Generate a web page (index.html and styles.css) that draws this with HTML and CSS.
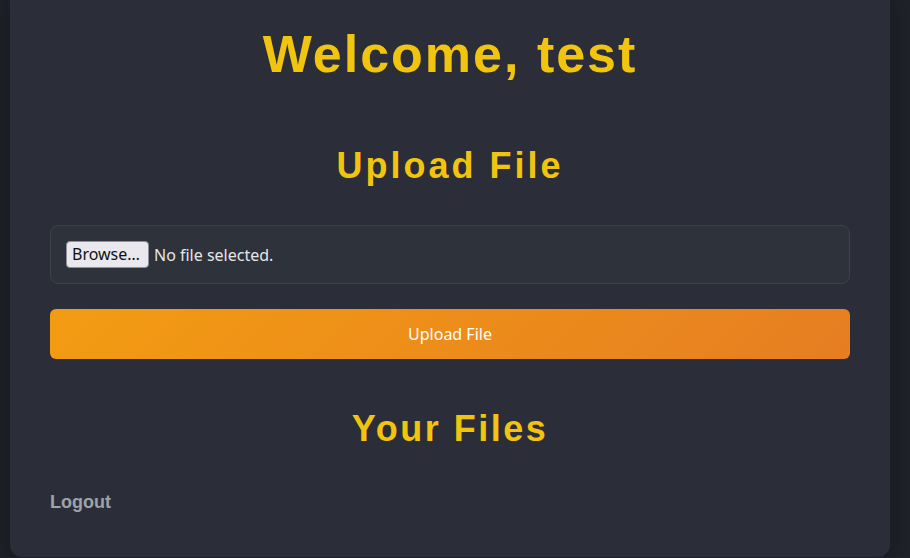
FILE: index.html
```html
<!DOCTYPE html>
<html lang="en">
<head>
  <meta charset="UTF-8" />
  <meta name="viewport" content="width=device-width, initial-scale=1.0"/>
  <title>Dashboard</title>
  <link rel="stylesheet" href="styles.css">
</head>
<body>
  <div class="dashboard">
    <h1>Welcome, test</h1>

    <h2 class="upload-title">Upload File</h2>
    <form class="upload-form">
      <label class="file-field" for="fileInput">
        <input type="file" id="fileInput" class="file-input" name="file"/>
        <span class="browse-btn">Browse…</span>
        <span class="file-name">No file selected.</span>
      </label>
      <button type="submit" class="upload-btn">Upload File</button>
    </form>

    <h2 class="files-title">Your Files</h2>
    <ul class="file-list"></ul>

    <a href="#" class="logout">Logout</a>
  </div>
</body>
</html>
```

FILE: styles.css
```css
body {
  margin: 0;
  padding: 0 20px 0 10px;
  background-color: #1f222a;
  font-family: 'Liberation Sans', Arial, sans-serif;
  color: #ddd;
}

.dashboard {
  margin-top: -16px;
  padding: 40px 40px 44px;
  background: #2b2e38;
  border-radius: 12px;
  box-shadow: 0 10px 30px rgba(0, 0, 0, 0.3);
}

h1, h2 {
  margin: 0;
  text-align: center;
  color: #f1c40f;
  font-weight: 700;
}

h1 {
  font-size: 52px;
  letter-spacing: 2px;
}

h2 {
  font-size: 36px;
  letter-spacing: 3px;
}

.upload-title {
  margin-top: 61px;
}

.upload-form {
  margin-top: 38px;
}

.file-field {
  display: flex;
  align-items: center;
  gap: 5px;
  padding: 15px;
  background: #2e323b;
  border: 1px solid #3d414c;
  border-radius: 8px;
  font-family: 'Noto Sans', sans-serif;
  font-size: 16px;
  color: #e6e6e6;
  cursor: pointer;
}

.file-input {
  display: none;
}

.browse-btn {
  display: inline-block;
  height: 25px;
  line-height: 25px;
  padding: 0 8px 0 5px;
  background: #e9e9ed;
  border: 1px solid #8f8f9d;
  border-radius: 4px;
  color: #111;
}

.upload-btn {
  display: block;
  width: 100%;
  margin-top: 25px;
  height: 50px;
  border: none;
  border-radius: 6px;
  background: linear-gradient(135deg, #f39c12, #e67e22);
  color: #fff;
  font-family: 'Noto Sans', sans-serif;
  font-size: 16px;
  cursor: pointer;
}

.files-title {
  margin-top: 49px;
  letter-spacing: 2.5px;
}

.file-list {
  list-style: none;
  margin: 0;
  padding: 0;
}

.logout {
  display: inline-block;
  margin-top: 42px;
  font-size: 18px;
  font-weight: 700;
  color: #9ea3aa;
  text-decoration: none;
}
```
